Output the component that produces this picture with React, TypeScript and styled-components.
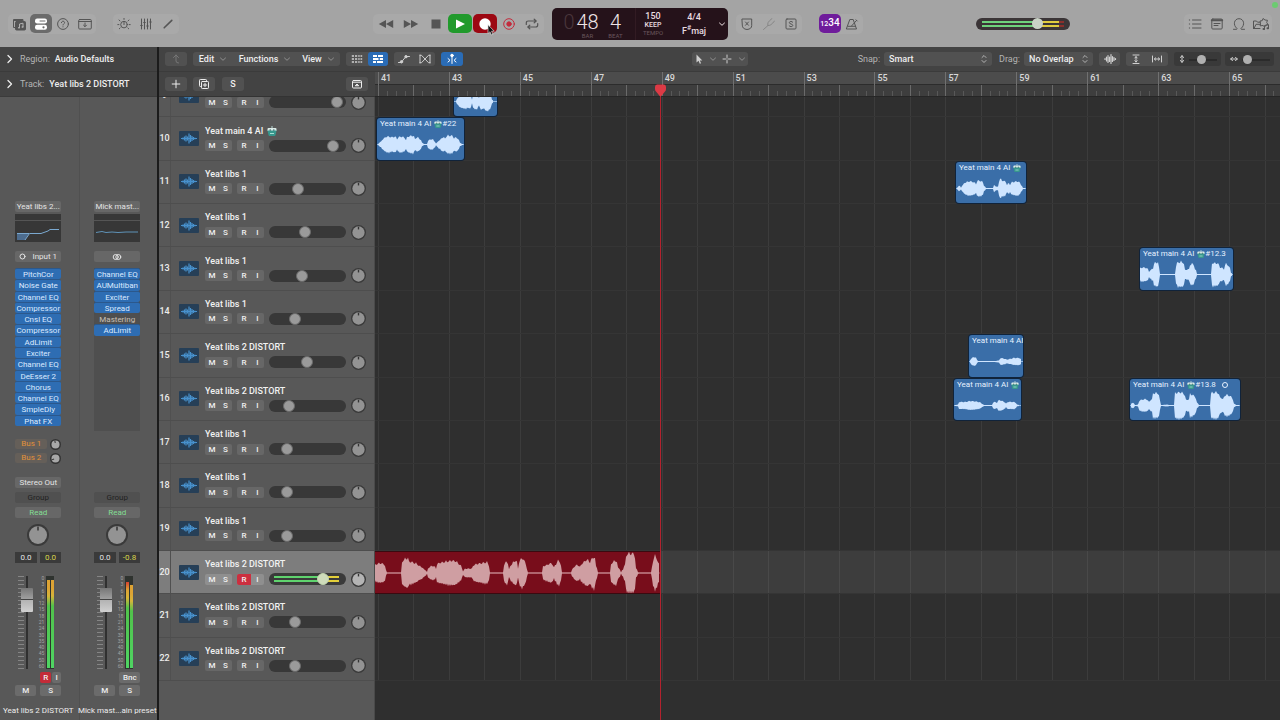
import React from "react";
import styled, { createGlobalStyle, css } from "styled-components";

const GlobalStyle = createGlobalStyle`
  *, *::before, *::after { box-sizing: border-box; }
  body { margin: 0; background: #303030; overflow: hidden; }
  button, input, select { font: inherit; color: inherit; margin: 0; padding: 0; border: 0; background: none; }
  svg { display: block; flex: none; }
`;

const Shell = styled.div`
  min-height: 100vh;
  display: flex;
  flex-direction: column;
  font-family: Roboto, "Liberation Sans", sans-serif;
  font-size: 9px;
  line-height: 11px;
  color: #ededed;
`;

/* ---------- icons ---------- */

type IconProps = { w?: number; h?: number; children: React.ReactNode; sw?: number };
const Icon = ({ w = 14, h = 14, sw = 1, children }: IconProps) => (
  <svg width={w} height={h} viewBox={`0 0 ${w} ${h}`} fill="none" stroke="currentColor" strokeWidth={sw} strokeLinecap="round" strokeLinejoin="round" aria-hidden="true">
    {children}
  </svg>
);

const LibraryIcon = () => (
  <Icon>
    <path d="M3 10.500H1.500v-8h9.500V4" />
    <path d="M1.500 3.500h9" />
    <rect x="3.500" y="4.500" width="10" height="8.500" rx="1" fill="currentColor" />
    <path d="M7.500 10.500V7l3.500-.8v3.600" stroke="#b0b0b0" />
    <path d="M6.700 10.700h.6M10.200 10h.6" stroke="#b0b0b0" strokeWidth="1.500" />
  </Icon>
);
const InspectorIcon = () => (
  <Icon>
    <rect x="1" y="1.500" width="12" height="5" rx="2.200" fill="#fff" stroke="none" />
    <rect x="1" y="7.800" width="12" height="5" rx="2.200" fill="#fff" stroke="none" />
    <path d="M6 4h5" stroke="#6a6a6a" />
    <circle cx="9.500" cy="10.300" r="1.100" fill="#6a6a6a" stroke="none" />
  </Icon>
);
const HelpIcon = () => (
  <Icon>
    <circle cx="7" cy="7" r="5.400" />
    <path d="M5.400 5.700c0-2.100 3.200-2 3.200 0 0 1.100-1.600 1.100-1.600 2.300M7 9.700v.2" />
  </Icon>
);
const ToolbarIcon = () => (
  <Icon>
    <rect x=".7" y="2.500" width="12.600" height="9.500" rx="1" />
    <path d="M.7 4.500h12.600M7 6v3.400M5.500 8.200L7 9.700l1.500-1.500" />
  </Icon>
);
const SmartIcon = () => (
  <Icon>
    <circle cx="7" cy="7.600" r="3.300" />
    <path d="M7 7.600V4.800M7 1.400v1M2 3l1 .9M12 3l-1 .9M.8 7.600h1.100M12.100 7.600h1.100M2.300 11.800l.8-.8M11.700 11.800l-.8-.8" />
  </Icon>
);
const MixerIcon = () => (
  <Icon>
    <path d="M2.500 2v10M5.500 2v10M8.500 2v10M11.500 2v10M1.700 8.500h1.600M4.700 5.500h1.600M7.700 9h1.600M10.700 5h1.600" />
  </Icon>
);
const PencilIcon = () => (
  <Icon sw={1.600}>
    <path d="M3.200 10.800l7.600-7.400" />
  </Icon>
);
const RewindIcon = () => (
  <Icon w={16}>
    <path d="M8 3v8L.8 7zM15.200 3v8L8 7z" fill="currentColor" stroke="none" />
  </Icon>
);
const ForwardIcon = () => (
  <Icon w={16}>
    <path d="M.8 3v8L8 7zM8 3v8l7.200-4z" fill="currentColor" stroke="none" />
  </Icon>
);
const StopIcon = () => (
  <Icon>
    <rect x="2.500" y="2.500" width="9" height="9" fill="currentColor" stroke="none" />
  </Icon>
);
const PlayIcon = () => (
  <Icon>
    <path d="M3 2.500v9L12 7z" fill="#fff" stroke="none" />
  </Icon>
);
const RecordIcon = () => (
  <Icon>
    <circle cx="7" cy="7" r="5.700" fill="#fff" stroke="none" />
  </Icon>
);
const CaptureIcon = () => (
  <Icon>
    <circle cx="7" cy="7" r="5.300" />
    <circle cx="7" cy="7" r="2.200" fill="currentColor" />
  </Icon>
);
const CycleIcon = () => (
  <Icon sw={1.200}>
    <path d="M1.300 7.500V6q0-2 2-2H11M9.200 2.200L11.200 4l-2 1.800M12.700 6.500V8q0 2-2 2H3M4.800 8.200L2.800 10l2 1.800" />
  </Icon>
);
const ReplaceIcon = () => (
  <Icon>
    <path d="M2.300 2h9.400v6.500q0 3.500-4.700 4-4.700-.5-4.700-4zM5.500 5l3 3.300M8.500 5l-3 3.300" />
  </Icon>
);
const TuningIcon = () => (
  <Icon>
    <path d="M1.500 12.500L6 8.500M6 8.500q-2-2.500 4-7M6 8.500q2.500 1 6.500-4.500" />
  </Icon>
);
const SoloIcon = () => (
  <Icon>
    <rect x="2" y="2" width="10" height="10" rx="1" />
    <path d="M8.800 5.200C8.200 4 5.300 4.200 5.300 5.700c0 1.600 3.500 1 3.500 2.700 0 1.500-3 1.700-3.700.4" />
  </Icon>
);
const MetronomeIcon = () => (
  <Icon>
    <path d="M5.200 2.500h3l3.300 9.500H1.700zM3 9.300h7.500M6.500 9l5-5.500M11 2.800l1.200 1.200" />
  </Icon>
);
const ListIcon = () => (
  <Icon>
    <path d="M4.500 3H13M4.500 7H13M4.500 11H13M1.300 3h.4M1.300 7h.4M1.300 11h.4" />
  </Icon>
);
const NoteIcon = () => (
  <Icon>
    <rect x="1.800" y="2" width="10.400" height="10" rx="1" />
    <path d="M1.800 3.300h10.400" strokeWidth="2" />
    <path d="M4 6.500h6M4 8.500h4" />
  </Icon>
);
const LoopIcon = () => (
  <Icon>
    <path d="M1.500 12.300h3c.8 0 .9-.5.300-1C.8 8 2 1.700 7 1.700s6.200 6.300 2.200 9.600c-.6.500-.5 1 .3 1h3" />
  </Icon>
);
const BrowserIcon = () => (
  <Icon w={18}>
    <path d="M1.500 11.500V4h3l1 1.200h2.500M1.500 11.500h6.500M2 11.500L4 7.300h4" />
    <path d="M8.500 6.500L8 4l2.200-.3L11 1.500l2 1.500 2.500.3-.8 2.200 1.300 2-2.300.8-1 1.700-1.700-1.500-2.500.3z" />
    <path d="M12.500 12V8.500l4-.8V11" />
    <path d="M11.500 12h.6M15.500 11.300h.6" strokeWidth="2" />
  </Icon>
);
const Chevron = () => (
  <Icon w={8} h={8}>
    <path d="M1.500 3L4 5.300 6.500 3" />
  </Icon>
);
const DimChevron = styled.span`
  color: #8f8f8f;
`;
const Disclosure = () => (
  <Icon w={6} h={10} sw={1.300}>
    <path d="M1 1.500L4.500 5 1 8.500" />
  </Icon>
);
const SteppersIcon = () => (
  <Icon w={6} h={10}>
    <path d="M1 3.500L3 1.500l2 2M1 6.500l2 2 2-2" />
  </Icon>
);
const UpIcon = () => (
  <Icon w={12} h={12}>
    <path d="M3.500 4.500L6 2l2.500 2.500M6 2v6q0 2 2.500 2" />
  </Icon>
);
const GridIcon = () => (
  <Icon w={12} h={12} sw={1.400}>
    <path d="M.8 3h2.200M4 3h2.200M7.200 3h1.500M9.500 3h1.700M.8 6h2.200M4 6h2.200M7.200 6h1.500M9.500 6h1.700M.8 9h2.200M4 9h2.200M7.200 9h1.500M9.500 9h1.700" strokeLinecap="butt" />
  </Icon>
);
const RegionsIcon = () => (
  <Icon w={12} h={12} sw={1.800}>
    <path d="M1 3h4M6 3h5M1 6h5.500M7.800 6h3.200M1 9h3M5 9h6" strokeLinecap="butt" />
  </Icon>
);
const AutomationIcon = () => (
  <Icon w={14} h={12}>
    <path d="M1.500 9.500h2.500L9 3.500h3.500" />
    <circle cx="4.500" cy="8.800" r="1.200" fill="currentColor" />
    <circle cx="9" cy="3.700" r="1.200" fill="currentColor" />
  </Icon>
);
const FlexIcon = () => (
  <Icon w={12} h={12}>
    <path d="M1 2v8M11 2v8M1 2.300h1.500L6 6 2.500 9.700H1M11 2.300H9.500L6 6l3.500 3.700H11" />
  </Icon>
);
const CatchIcon = () => (
  <Icon w={12} h={12}>
    <path d="M6 2.500v8M2 5.500L4 7.300 2 9M10 5.500L8 7.300 10 9" />
    <circle cx="6" cy="2.500" r="1.300" fill="currentColor" />
  </Icon>
);
const PointerIcon = () => (
  <Icon w={10} h={12}>
    <path d="M2.500 1.500v8l2-1.700 1.300 3 1.300-.6-1.300-2.800h2.500z" fill="currentColor" stroke="none" />
  </Icon>
);
const MarqueeIcon = () => (
  <Icon w={12} h={12}>
    <path d="M6 2v2.500M6 7.500V10M2 6h2.500M7.500 6H10M6 5.800v.4" />
  </Icon>
);
const WaveIcon = () => (
  <Icon w={14} h={12} sw={1.200}>
    <path d="M2 5.500v1M3.500 4v4M5 2.500v7M6.500 4v4.500M8 1.500v9M9.500 3.500v5M11 4.500v3M12.500 5.500v1" />
  </Icon>
);
const FitVIcon = () => (
  <Icon w={12} h={12}>
    <path d="M3 2h6M3 10.500h6M6 3.500V9M4.800 5L6 3.700 7.200 5M4.800 7.700L6 9l1.200-1.300" />
  </Icon>
);
const FitHIcon = () => (
  <Icon w={12} h={12}>
    <path d="M1.500 3v6M10.500 3v6M3.500 6h5M4.700 4.800L3.300 6l1.400 1.200M7.300 4.800L8.700 6 7.300 7.200" />
  </Icon>
);
const ArrowVIcon = () => (
  <Icon w={8} h={10}>
    <path d="M4 2v6M2.500 3.500L4 1.500l1.500 2M2.500 6.500L4 8.500l1.500-2" />
  </Icon>
);
const ArrowHIcon = () => (
  <Icon w={10} h={8}>
    <path d="M2 4h6M3.500 2.500L1.500 4l2 1.500M6.500 2.500L8.500 4l-2 1.500" />
  </Icon>
);
const PlusIcon = () => (
  <Icon w={12} h={12}>
    <path d="M6 2.200v7.600M2.200 6h7.600" />
  </Icon>
);
const DuplicateIcon = () => (
  <Icon w={12} h={12}>
    <path d="M3.500 8.500H2.300q-.8 0-.8-.8V2.300q0-.8.8-.8h5.400q.8 0 .8.800v1.200" />
    <rect x="3.500" y="3.500" width="7" height="7" rx=".8" />
    <path d="M7 5.300v3.400M5.300 7h3.400" />
  </Icon>
);
const TrackBoxIcon = () => (
  <Icon w={12} h={12}>
    <rect x="1.500" y="2.500" width="9" height="7.500" rx="1" />
    <path d="M1.500 4.200h9" />
    <path d="M4.500 7.500L6 6l1.500 1.500z" fill="currentColor" />
  </Icon>
);
const StereoIcon = () => (
  <Icon w={10} h={8}>
    <circle cx="3.700" cy="4" r="2.500" />
    <circle cx="6.300" cy="4" r="2.500" />
  </Icon>
);
const RobotIcon = ({ size = 10 }: { size?: number }) => (
  <svg width={size} height={size} viewBox="0 0 10 10" aria-hidden="true">
    <path d="M5 0v2" stroke="#b7d7d2" />
    <path d="M.5 3q0-1 1-1h7q1 0 1 1v2h-9z" fill="#dcebe8" />
    <path d="M.5 4.500h9L8.500 9q-.2 1-1 1h-5q-.8 0-1-1z" fill="#37978d" />
    <path d="M2.500 4h1.500M6 4h1.500" stroke="#27595a" />
    <path d="M3 7.500h4" stroke="#a8e0d4" />
  </svg>
);

/* ---------- top control bar ---------- */

const ControlBar = styled.header`
  position: relative;
  height: 47px;
  flex: none;
  display: grid;
  grid-template-columns: 1fr auto 1fr;
  align-items: center;
  background: #a4a4a4;
  color: #555;
`;
const BarSide = styled.div`
  display: flex;
  align-items: center;
  padding: 0 8px;
`;
const ToolGroup = styled.div`
  display: flex;
  align-items: center;
  height: 20px;
  border-radius: 5px;
  background: #a9a9a9;
`;
const Spacer = styled.div`
  flex: 1;
`;
const Gap = styled.div<{ $w: number }>`
  width: ${(p) => p.$w}px;
  flex: none;
`;
const ToolButton = styled.button<{ $w?: number; $bg?: string; $fg?: string; $dim?: boolean }>`
  position: relative;
  width: ${(p) => p.$w ?? 22}px;
  height: 19px;
  display: flex;
  align-items: center;
  justify-content: center;
  border-radius: 5px;
  background: ${(p) => p.$bg ?? "none"};
  color: ${(p) => p.$fg ?? "inherit"};
  opacity: ${(p) => (p.$dim ? 0.4 : 1)};
  font-weight: 500;
`;
const Cursor = styled.svg`
  position: absolute;
  left: 14px;
  top: 10px;
  z-index: 2;
`;
const Lcd = styled.div`
  width: 176px;
  height: 32px;
  display: grid;
  grid-template-columns: 84px 34px 48px 10px;
  align-items: center;
  border-radius: 5px;
  background: #25121a;
  color: #e9dde0;
`;
const Counter = styled.div`
  display: grid;
  grid-template-columns: 12px 25px 31px;
  justify-content: start;
  padding-left: 11px;
  border-right: 1px solid #321b23;
  height: 32px;
`;
const CounterCell = styled.div<{ $dim?: boolean }>`
  display: flex;
  flex-direction: column;
  align-items: center;
  font-size: 20px;
  line-height: 22px;
  padding-top: 3px;
  font-weight: 300;
  color: ${(p) => (p.$dim ? "#4a363c" : "#efe4e6")};
`;
const LcdCaption = styled.small`
  font-size: 6px;
  line-height: 6px;
  font-weight: 400;
  color: #6a565c;
`;
const LcdStack = styled.div<{ $gap?: number }>`
  display: flex;
  flex-direction: column;
  align-items: center;
  gap: ${(p) => p.$gap ?? 0}px;
  font-weight: 500;
  line-height: 10px;
`;
const Keep = styled.span`
  font-size: 7px;
  line-height: 9px;
`;
const Sharp = styled.sup`
  font-size: 7px;
  line-height: 0;
`;
const CountIn = styled.span`
  font-size: 10px;
  color: #fff;
`;
const CountInSmall = styled.span`
  font-size: 7px;
`;
const MasterVolume = styled.input`
  appearance: none;
  width: 94px;
  height: 12px;
  border-radius: 6px;
  background:
    linear-gradient(90deg, #6fd37c 68%, #e0cc3e 68%, #e0cc3e 94%, #8b2f2c 94%) 6px 3px / 82px 2px no-repeat,
    linear-gradient(90deg, #6fd37c 68%, #e0cc3e 68%, #e0cc3e 94%, #8b2f2c 94%) 6px 7px / 82px 2px no-repeat,
    #3b3537;
  &::-webkit-slider-thumb {
    appearance: none;
    width: 11px;
    height: 11px;
    border-radius: 50%;
    background: #c9d2c6;
  }
`;
const CameraDot = styled.span`
  position: absolute;
  top: 2px;
  right: 2px;
  width: 6px;
  height: 6px;
  border-radius: 50%;
  background: #6ccb70;
`;

/* ---------- main frame ---------- */

const Main = styled.main`
  flex: 1;
  display: grid;
  grid-template-columns: 157px 1fr;
  background: #1b1b1b;
  column-gap: 2px;
`;

/* ---------- inspector ---------- */

const Inspector = styled.aside`
  background: #585858;
  display: flex;
  flex-direction: column;
`;
const InspectorHead = styled.button`
  height: 25px;
  display: flex;
  align-items: center;
  gap: 5px;
  padding: 0 7px;
  background: #434343;
  border-bottom: 1px solid #3b3b3b;
  font-weight: 500;
  white-space: nowrap;
`;
const HeadLabel = styled.span`
  margin-left: 2px;
  font-weight: 400;
  color: #b4b4b4;
`;
const Strips = styled.div`
  flex: 1;
  display: grid;
  grid-template-columns: 1fr 1fr;
`;
const Strip = styled.section`
  min-width: 0;
  padding: 104px 2px 0 0;
  display: flex;
  flex-direction: column;
  align-items: center;
  font-size: 8px;
  & + & {
    border-left: 1px solid #505050;
  }
`;
const StripButton = styled.button<{ $mt?: number; $tone?: "group" | "read"; $hidden?: boolean }>`
  width: 46px;
  height: 11px;
  flex: none;
  display: flex;
  align-items: center;
  justify-content: center;
  gap: 6px;
  margin-top: ${(p) => p.$mt ?? 0}px;
  border-radius: 2px;
  background: #676767;
  color: #e4e4e4;
  line-height: 11px;
  white-space: nowrap;
  visibility: ${(p) => (p.$hidden ? "hidden" : "visible")};
  ${(p) => p.$tone === "group" && css`background: #505050; color: #222;`}
  ${(p) => p.$tone === "read" && css`color: #83dd93;`}
`;
const EqBox = styled.div`
  width: 46px;
  height: 28px;
  flex: none;
  margin-top: 2px;
  background: #373737;
`;
const Slots = styled.div<{ $open?: boolean }>`
  width: 46px;
  height: 163px;
  flex: none;
  margin-top: 6px;
  background: ${(p) => (p.$open ? "#4f4f4f" : "none")};
`;
const SlotGrid = styled.div`
  height: 158px;
  display: grid;
  grid-template-rows: repeat(14, 1fr);
`;
const Slot = styled.button<{ $off?: boolean }>`
  min-height: 0;
  line-height: 11px;
  border-top: 1px solid ${(p) => (p.$off ? "#4f4f4f" : "#2b588c")};
  border-radius: 2px;
  background: ${(p) => (p.$off ? "#4f4f4f" : "#2e6db3")};
  color: ${(p) => (p.$off ? "#c9c0b8" : "#dceaff")};
  white-space: nowrap;
`;
const Sends = styled.div<{ $hidden?: boolean }>`
  width: 46px;
  height: 24px;
  flex: none;
  margin-top: 8px;
  display: flex;
  flex-direction: column;
  justify-content: space-between;
  visibility: ${(p) => (p.$hidden ? "hidden" : "visible")};
`;
const Send = styled.div`
  display: flex;
  justify-content: space-between;
  align-items: center;
  height: 10px;
`;
const SendButton = styled.button`
  width: 32px;
  height: 10px;
  line-height: 10px;
  border-radius: 2px;
  background: #655f59;
  color: #e0913a;
`;
const KnobButton = styled.button<{ $mt?: number }>`
  flex: none;
  margin-top: ${(p) => p.$mt ?? 0}px;
`;
const Readouts = styled.div`
  width: 46px;
  flex: none;
  margin-top: 6px;
  display: grid;
  grid-template-columns: 1fr 1fr;
  gap: 3px;
`;
const Readout = styled.output<{ $hot?: boolean }>`
  height: 11px;
  text-align: center;
  background: #3a3a3a;
  color: ${(p) => (p.$hot ? "#d9d54a" : "#e4e4e4")};
`;
const FaderArea = styled.div`
  width: 46px;
  height: 93px;
  flex: none;
  margin-top: 13px;
  display: flex;
  padding-left: 3px;
`;
const FaderTicks = styled.div`
  width: 6px;
  background: repeating-linear-gradient(#858585 0 1px, transparent 1px 4px);
`;
const Fader = styled.input`
  appearance: none;
  writing-mode: vertical-lr;
  direction: rtl;
  width: 12px;
  height: 93px;
  margin-left: -3px;
  background: linear-gradient(#303030, #303030) 5px 0 / 2px 93px no-repeat;
  &::-webkit-slider-thumb {
    appearance: none;
    width: 12px;
    height: 24px;
    border-radius: 1px;
    background: linear-gradient(#777, #a0a0a0 46%, #444 46%, #444 52%, #b4b4b4 52%, #d0d0d0);
  }
`;
const FaderScale = styled.ol`
  width: 10px;
  margin: 0 2px 0 1px;
  padding: 0;
  list-style: none;
  display: flex;
  flex-direction: column;
  justify-content: space-between;
  font-size: 5px;
  line-height: 5px;
  text-align: right;
  color: #a3a3a3;
`;
const Meter = styled.div`
  width: 8px;
  height: 93px;
  display: grid;
  grid-template-columns: 3px 3px;
  gap: 1px;
  align-items: end;
  padding: 0 0 1px 1px;
  background: #2f332f;
`;
const MeterBar = styled.div<{ $h: number; $clip?: boolean }>`
  height: ${(p) => p.$h}px;
  background: linear-gradient(${(p) => (p.$clip ? "#d8402f" : "#dda334")}, #dda334 8px, #d6b43a 16px, #51c24b 26px, #4fd463);
`;
const PairRow = styled.div<{ $mt: number; $gap: number; $end?: boolean }>`
  width: 46px;
  height: 11px;
  flex: none;
  margin-top: ${(p) => p.$mt}px;
  display: flex;
  gap: ${(p) => p.$gap}px;
  justify-content: ${(p) => (p.$end ? "flex-end" : "space-between")};
`;
const MiniButton = styled.button<{ $w?: number; $rec?: boolean }>`
  width: ${(p) => p.$w ?? 21}px;
  height: 11px;
  line-height: 11px;
  border-radius: 2px;
  background: ${(p) => (p.$rec ? "#c42b38" : "#6b6b6b")};
  color: #eee;
  font-weight: 500;
`;
const StripName = styled.div`
  margin-top: 9px;
  text-align: center;
  white-space: nowrap;
  line-height: 12px;
`;

/* ---------- tracks area ---------- */

const Workspace = styled.section`
  min-width: 0;
  display: flex;
  flex-direction: column;
  background: #2c2c2c;
`;
const MenuBar = styled.nav`
  height: 25px;
  flex: none;
  display: flex;
  align-items: center;
  padding: 0 6px;
  background: #434343;
  border-bottom: 1px solid #3b3b3b;
  color: #cfcfcf;
`;
const MenuGroup = styled.div`
  display: flex;
  height: 14px;
  border-radius: 3px;
  background: #515151;
`;
const MenuButton = styled.button<{ $w?: number; $on?: boolean; $solid?: boolean; $dim?: boolean }>`
  width: ${(p) => p.$w ?? 22}px;
  height: 14px;
  flex: none;
  display: flex;
  align-items: center;
  justify-content: center;
  gap: 5px;
  border-radius: 3px;
  background: ${(p) => (p.$on ? "#2a6cb6" : p.$solid ? "#515151" : "none")};
  color: ${(p) => (p.$on ? "#fff" : p.$dim ? "#777" : "inherit")};
`;
const MenuText = styled.span`
  color: #eee;
  font-weight: 500;
`;
const Field = styled.label`
  display: flex;
  align-items: center;
  gap: 4px;
  color: #b4b4b4;
`;
const SelectBox = styled.span<{ $w: number }>`
  width: ${(p) => p.$w}px;
  height: 14px;
  display: flex;
  align-items: center;
  padding: 0 5px;
  border-radius: 3px;
  background: #515151;
`;
const Select = styled.select`
  appearance: none;
  flex: 1;
  min-width: 0;
  color: #eee;
  font-weight: 500;
  outline: none;
`;
const ZoomBox = styled.label`
  display: flex;
  align-items: center;
  gap: 3px;
  height: 14px;
  padding: 0 4px;
  border-radius: 3px;
  background: #393939;
`;
const ZoomSlider = styled.input`
  appearance: none;
  width: 28px;
  height: 9px;
  background: linear-gradient(#2b2b2b, #2b2b2b) 0 4px / 28px 2px no-repeat;
  &::-webkit-slider-thumb {
    appearance: none;
    width: 9px;
    height: 9px;
    border-radius: 50%;
    background: #b0b0b0;
  }
`;
const HeadRow = styled.div`
  height: 25px;
  flex: none;
  display: grid;
  grid-template-columns: 216px 1fr;
  background: #434343;
`;
const HeadTools = styled.div`
  display: flex;
  align-items: center;
  padding: 0 7px 0 6px;
  border-bottom: 1px solid #333;
`;
const Ruler = styled.div`
  min-width: 0;
  overflow: hidden;
  padding-left: 3px;
  background: linear-gradient(#4c4c4c 12px, #2c2c2c 12px, #2c2c2c 13px, #3e3e3e 13px);
  border-bottom: 1px solid #262626;
`;
const RulerCells = styled.div`
  width: 922px;
  height: 24px;
  display: grid;
  grid-template-columns: repeat(13, 1fr);
`;
const RulerCell = styled.div`
  display: flex;
  flex-direction: column;
  border-left: 1px solid #707070;
  font-weight: 500;
  line-height: 12px;
  color: #d8d8d8;
`;
const RulerLabel = styled.span`
  padding-left: 2px;
`;
const Ticks = styled.div`
  height: 12px;
  display: grid;
  grid-template-columns: repeat(8, 1fr);
  align-items: end;
  margin-left: -1px;
`;
const Tick = styled.i<{ $bar?: boolean }>`
  height: ${(p) => (p.$bar ? 11 : 5)}px;
  border-left: 1px solid ${(p) => (p.$bar ? "#6a6a6a" : "#585858")};
`;
const Board = styled.div`
  position: relative;
  flex: 1;
  min-height: 0;
  display: grid;
  grid-template-columns: 216px 1fr;
`;
const HeadersColumn = styled.div`
  background: #585858;
  border-right: 1px solid #4a4a4a;
  overflow: hidden;
`;
const LanesColumn = styled.div`
  min-width: 0;
  overflow: hidden;
  background: #2f2f2f;
`;
const rows = css`
  height: 607px;
  margin-top: -23px;
  display: grid;
  grid-template-rows: repeat(14, 1fr);
`;
const TrackList = styled.ol`
  ${rows}
  padding: 0;
  margin-bottom: 0;
  margin-left: 0;
  list-style: none;
`;
const Track = styled.li<{ $sel?: boolean }>`
  display: grid;
  grid-template-columns: 12px 33px 1fr;
  align-items: center;
  min-height: 0;
  border-bottom: 1px solid #4e4e4e;
  background: ${(p) => (p.$sel ? "#7d7d7d" : "none")};
`;
const TrackNumber = styled.span`
  align-self: stretch;
  display: flex;
  align-items: center;
  justify-content: center;
  border-right: 1px solid #505050;
  font-weight: 500;
`;
const TrackBody = styled.div`
  padding: 1px 0 0 1px;
  display: flex;
  flex-direction: column;
  gap: 1px;
`;
const TrackName = styled.div`
  display: flex;
  gap: 4px;
  align-items: center;
  height: 12px;
  font-weight: 500;
  white-space: nowrap;
  color: #f2f2f2;
`;
const TrackControls = styled.div`
  display: flex;
  align-items: center;
  height: 15px;
`;
const ButtonPair = styled.div<{ $sel?: boolean }>`
  display: flex;
  height: 11px;
  margin-right: 5px;
  border-radius: 2px;
  overflow: hidden;
  background: ${(p) => (p.$sel ? "#8f8f8f" : "#676767")};
`;
const TrackButton = styled.button<{ $rec?: boolean }>`
  width: 14px;
  height: 11px;
  font-size: 8px;
  line-height: 11px;
  font-weight: 500;
  color: #f2f2f2;
  background: ${(p) => (p.$rec ? "#cc2f3f" : "none")};
  & + & {
    width: 13px;
  }
`;
const TrackVolume = styled.input<{ $live?: boolean }>`
  appearance: none;
  width: 77px;
  height: 12px;
  margin-right: 5px;
  border-radius: 6px;
  background: ${(p) =>
    p.$live
      ? css`linear-gradient(90deg, #5fd36e 80%, #e3cf3a 80%) 5px 3px / 65px 2px no-repeat,
        linear-gradient(90deg, #5fd36e 80%, #e3cf3a 80%) 5px 7px / 65px 2px no-repeat,
        #3a3a3a`
      : "#383838"};
  &::-webkit-slider-thumb {
    appearance: none;
    width: 12px;
    height: 12px;
    border-radius: 50%;
    border: 1px solid ${(p) => (p.$live ? "#c0d3ae" : "#6a6a6a")};
    background: ${(p) => (p.$live ? "#cfdcbb" : "#9a9a9a")};
  }
`;
const Lanes = styled.div`
  ${rows}
  position: relative;
  overflow: hidden;
`;
const BarLines = styled.div`
  position: absolute;
  top: 0;
  bottom: 0;
  left: 3px;
  width: 922px;
  display: grid;
  grid-template-columns: repeat(26, 1fr);
`;
const BarLine = styled.i`
  border-left: 1px solid #3c3c3c;
`;
const Lane = styled.div<{ $sel?: boolean }>`
  position: relative;
  min-height: 0;
  border-bottom: 1px solid #353535;
  background: ${(p) => (p.$sel ? "rgba(255,255,255,0.07)" : "none")};
`;
const RegionBox = styled.div<{ $x: number; $w: number; $rec?: boolean }>`
  position: absolute;
  top: 1px;
  bottom: 0;
  left: ${(p) => p.$x}px;
  width: ${(p) => p.$w}px;
  overflow: hidden;
  border-radius: ${(p) => (p.$rec ? 0 : 3)}px;
  background: ${(p) => (p.$rec ? "#780d1b" : "#3a6ea8")};
  box-shadow: 0 0 0 1px ${(p) => (p.$rec ? "#3a0a10" : "#10233a")};
`;
const RegionLabel = styled.div`
  position: absolute;
  top: 1px;
  left: 3px;
  display: flex;
  align-items: center;
  font-size: 8px;
  line-height: 10px;
  white-space: nowrap;
  color: #e6f1ff;
`;
const RobotSlot = styled.span`
  margin-left: 3px;
`;
const LoopDot = styled.i`
  width: 6px;
  height: 6px;
  margin-left: 6px;
  border: 1px solid #e6f1ff;
  border-radius: 50%;
`;
const Wave = styled.svg`
  position: absolute;
  left: 0;
  top: 0;
`;
const Playhead = styled.div`
  position: absolute;
  top: -13px;
  bottom: 0;
  left: 495px;
  width: 13px;
  z-index: 3;
  pointer-events: none;
  display: flex;
  flex-direction: column;
  align-items: center;
`;
const PlayLine = styled.i`
  flex: 1;
  width: 1px;
  background: #b3222e;
`;

/* ---------- waveforms ---------- */

type Env = [number, number][];

/* Builds a closed outline from [x, amplitude] pairs; the ramps bulge outwards. */
const waveShape = (env: Env, mid: number, rough: number) => {
  const top: string[] = [];
  const bottom: string[] = [];
  for (let i = 0; i < env.length - 1; i++) {
    const [x0, a0] = env[i];
    const [x1, a1] = env[i + 1];
    const steps = Math.max(1, Math.round(x1 - x0));
    for (let s = 0; s < steps; s++) {
      const t = s / steps;
      const ease = a1 < a0 ? t * t : 1 - (1 - t) * (1 - t);
      const x = x0 + (x1 - x0) * t;
      const a = a0 + (a1 - a0) * ease;
      const up = a * (1 - rough * Math.abs(Math.sin(x * 2.3)));
      const down = a * (1 - rough * Math.abs(Math.cos(x * 1.7)));
      top.push(`${x.toFixed(1)} ${(mid - Math.max(up, 0.4)).toFixed(1)}`);
      bottom.unshift(`${x.toFixed(1)} ${(mid + Math.max(down, 0.4)).toFixed(1)}`);
    }
  }
  return `M${top.join("L")}L${bottom.join("L")}Z`;
};

const phraseEnv: Env = [
  [1, 0], [4, 3], [6, 6], [11, 9], [15, 8], [18, 9], [20, 6], [23, 9], [27, 8], [29, 5], [31, 9], [36, 10], [38, 6], [40, 8], [43, 6], [45, 2], [47, 0], [50, 0], [51, 4], [55, 6], [57, 4], [59, 1], [60, 2], [63, 5], [66, 8], [68, 7], [71, 10], [75, 10], [77, 7], [79, 8], [83, 2], [85, 0], [87, 0],
];
const shortEnv: Env = [
  [2, 0], [4, 4], [7, 7], [11, 8], [14, 7], [16, 8], [18, 2], [19, 7], [22, 9], [25, 4], [27, 9], [30, 8], [33, 11], [36, 8], [38, 2], [40, 0],
];
const libEnv: Env = [
  [1, 0], [3, 3], [5, 1], [7, 4], [10, 7], [14, 8], [18, 7], [20, 5], [22, 9], [26, 8], [28, 3], [30, 0], [37, 0], [38, 4], [40, 2], [42, 2], [43, 8], [44, 11], [46, 9], [49, 8], [51, 4], [53, 6], [54, 4], [56, 7], [62, 8], [65, 4], [67, 0], [70, 0],
];
const burstEnv: Env = [
  [0, 7], [3, 8], [7, 7], [9, 3], [11, 5], [13, 7], [14, 12], [18, 14], [19, 8], [20, 0], [35, 0], [36, 9], [38, 14], [43, 14], [45, 5], [49, 6], [50, 11], [53, 12], [55, 6], [57, 0], [71, 0], [72, 13], [77, 13], [80, 8], [84, 6], [86, 12], [89, 9], [91, 2], [93, 0],
];
const quietEnv: Env = [
  [1, 1], [3, 4], [6, 5], [8, 2], [9, 0], [26, 0], [28, 1], [30, 1], [32, 4], [35, 3], [38, 2], [42, 3], [45, 4], [50, 4], [53, 1],
];
const calmEnv: Env = [
  [1, 0], [4, 1], [5, 4], [12, 4], [17, 5], [24, 4], [28, 2], [30, 0], [38, 0], [40, 4], [43, 3], [45, 6], [50, 4], [52, 2], [54, 4], [60, 4], [63, 1], [66, 0],
];
const longEnv: Env = [
  [1, 2], [3, 3], [5, 0], [8, 1], [10, 6], [16, 7], [19, 4], [22, 7], [23, 14], [28, 14], [30, 5], [31, 0], [37, 1], [40, 0], [44, 0], [45, 14], [50, 15], [54, 13], [56, 6], [59, 7], [60, 13], [64, 11], [67, 3], [69, 0], [80, 0], [81, 14], [87, 15], [90, 9], [93, 7], [96, 12], [101, 10], [104, 2], [106, 0], [110, 0],
];
const recordEnv: Env = [
  [0, 9], [5, 11], [9, 10], [11, 3], [12, 0], [26, 0], [27, 12], [29, 15], [33, 17], [34, 13], [40, 11], [44, 8], [49, 4], [52, 1], [53, 5], [58, 8], [61, 5], [62, 10], [67, 12], [72, 13], [78, 14], [84, 10], [88, 2], [91, 5], [97, 5], [99, 9], [106, 11], [112, 12], [114, 8], [115, 0], [128, 0], [129, 9], [132, 13], [134, 4], [137, 10], [141, 14], [143, 5], [145, 14], [147, 17], [149, 14], [152, 4], [153, 0], [167, 0], [168, 7], [172, 9], [176, 11], [179, 6], [181, 10], [184, 14], [186, 8], [187, 0], [196, 0], [198, 5], [202, 9], [205, 7], [209, 12], [212, 15], [215, 12], [219, 18], [221, 8], [223, 0], [235, 0], [236, 10], [241, 14], [243, 6], [245, 4], [246, 0], [248, 4], [250, 9], [252, 22], [259, 22], [261, 5], [263, 1], [265, 0], [276, 0], [277, 7], [280, 19], [283, 12], [285, 4],
];

const TrackIcon = () => (
  <IconTile width="20" height="15" viewBox="0 0 20 15" aria-hidden="true">
    <rect width="20" height="15" rx="1" fill="#263f57" />
    <path d="M2 7.500h16M4 6.500v2M5.500 5.500v4M7 4.500v6M8.500 5.500v4M10 2.500v10M11.500 4v7M13 5v5M14.500 6v3M16 6.800v1.500" stroke="#4791cd" strokeWidth="1.200" />
  </IconTile>
);
const IconTile = styled.svg`
  margin-left: 8px;
`;

const PanKnob = ({ size, mt, light }: { size: number; mt?: number; light?: boolean }) => (
  <KnobButton $mt={mt} aria-label="Pan">
    <svg width={size} height={size} viewBox="0 0 22 22" aria-hidden="true">
      <circle cx="11" cy="11" r="11" fill="#3a3a3a" />
      <circle cx="11" cy="11" r="9" fill={light ? "#b4b4b4" : "#939393"} />
      <path d="M11 2.500v4" stroke="#333" strokeWidth={size > 18 ? 1.5 : 2} />
    </svg>
  </KnobButton>
);
const SendKnob = ({ turn }: { turn: number }) => (
  <KnobButton aria-label="Send level">
    <svg width="11" height="11" viewBox="0 0 11 11" aria-hidden="true">
      <circle cx="5.500" cy="5.500" r="5.500" fill="#333" />
      <circle cx="5.500" cy="5.500" r="4" fill="#a8a8a8" />
      <path d="M5.500 4V1.500" stroke="#333" transform={`rotate(${turn} 5.5 5.5)`} />
    </svg>
  </KnobButton>
);

/* ---------- data ---------- */

type RegionData = { x: number; w: number; env: Env; label?: string; tag?: string; robot?: boolean; loop?: boolean; rec?: boolean };
type TrackData = { n: number; name: string; vol: number; robot?: boolean; sel?: boolean; regions?: RegionData[] };

/* Track 9 is scrolled half under the ruler, so only its controls are in view. */
const tracks: TrackData[] = [
  { n: 9, name: "", vol: 62, regions: [{ x: 79, w: 43, env: shortEnv }] },
  { n: 10, name: "Yeat main 4 AI", vol: 58, robot: true, regions: [{ x: 2, w: 87, env: phraseEnv, label: "Yeat main 4 AI", tag: "#22", robot: true }] },
  { n: 11, name: "Yeat libs 1", vol: 23, regions: [{ x: 581, w: 70, env: libEnv, label: "Yeat main 4 AI", robot: true }] },
  { n: 12, name: "Yeat libs 1", vol: 30 },
  { n: 13, name: "Yeat libs 1", vol: 27, regions: [{ x: 765, w: 93, env: burstEnv, label: "Yeat main 4 AI", tag: "#12.3", robot: true }] },
  { n: 14, name: "Yeat libs 1", vol: 20 },
  { n: 15, name: "Yeat libs 2 DISTORT", vol: 32, regions: [{ x: 594, w: 54, env: quietEnv, label: "Yeat main 4 AI" }] },
  {
    n: 16, name: "Yeat libs 2 DISTORT", vol: 14, regions: [
      { x: 579, w: 67, env: calmEnv, label: "Yeat main 4 AI", robot: true },
      { x: 755, w: 110, env: longEnv, label: "Yeat main 4 AI", tag: "#13.8", robot: true, loop: true },
    ],
  },
  { n: 17, name: "Yeat libs 1", vol: 12 },
  { n: 18, name: "Yeat libs 1", vol: 12 },
  { n: 19, name: "Yeat libs 1", vol: 12 },
  { n: 20, name: "Yeat libs 2 DISTORT", vol: 48, sel: true, regions: [{ x: 0, w: 285, env: recordEnv, rec: true }] },
  { n: 21, name: "Yeat libs 2 DISTORT", vol: 20 },
  { n: 22, name: "Yeat libs 2 DISTORT", vol: 20 },
];

const scale = [0, 3, 6, 9, 12, 15, 18, 21, 24, 30, 35, 40, 45, 50, 60];

type StripData = {
  title: string; name: string; slots: string[]; off?: string; input?: string; out?: string; peak: string;
  sends?: boolean; bars: [number, number]; clip?: boolean; curve: React.ReactNode;
};
const strips: StripData[] = [
  {
    title: "Yeat libs 2...", name: "Yeat libs 2 DISTORT", input: "Input 1", out: "Stereo Out", peak: "0.0", sends: true, bars: [88, 88],
    slots: ["PitchCor", "Noise Gate", "Channel EQ", "Compressor", "Cnsl EQ", "Compressor", "AdLimit", "Exciter", "Channel EQ", "DeEsser 2", "Chorus", "Channel EQ", "SmpleDly", "Phat FX"],
    curve: (
      <>
        <path d="M2 19.500H14L10 26H2z" fill="#4d6c8e" />
        <path d="M2 19.500H14M10 26L14.500 19.500H26L33 17l2-1.500h9" fill="none" stroke="#7ba9d0" />
      </>
    ),
  },
  {
    title: "Mick mast...", name: "Mick mast...ain preset", peak: "-0.8", bars: [86, 83], clip: true, off: "Mastering",
    slots: ["Channel EQ", "AUMultiban", "Exciter", "Spread", "Mastering", "AdLimit"],
    curve: <path d="M2 18.500l6-1 4 1 6-.5 6 .5 8-.5h12" fill="none" stroke="#5f93b8" />,
  },
];

/* ---------- pieces ---------- */

const ChannelStrip = ({ s }: { s: StripData }) => (
  <Strip>
    <StripButton>{s.title}</StripButton>
    <EqBox>
      <svg width="46" height="28" viewBox="0 0 46 28" aria-hidden="true">
        <path d="M0 6.500h46" stroke="#555" />
        {s.curve}
      </svg>
    </EqBox>
    <StripButton $mt={9}>
      {s.input ? (
        <>
          <Icon w={7} h={7}><circle cx="3.500" cy="3.500" r="2.500" /></Icon>
          {s.input}
        </>
      ) : (
        <StereoIcon />
      )}
    </StripButton>
    <Slots $open={!s.sends}>
      <SlotGrid>
        {s.slots.map((p, i) => (
          <Slot key={i} $off={p === s.off}>{p}</Slot>
        ))}
      </SlotGrid>
    </Slots>
    <Sends $hidden={!s.sends}>
      {s.sends && (
        <>
          <Send><SendButton>Bus 1</SendButton><SendKnob turn={-10} /></Send>
          <Send><SendButton>Bus 2</SendButton><SendKnob turn={-110} /></Send>
        </>
      )}
    </Sends>
    <StripButton $mt={14} $hidden={!s.out}>{s.out}</StripButton>
    <StripButton $mt={4} $tone="group">Group</StripButton>
    <StripButton $mt={4} $tone="read">Read</StripButton>
    <PanKnob size={22} mt={6} />
    <Readouts>
      <Readout>0.0</Readout>
      <Readout $hot>{s.peak}</Readout>
    </Readouts>
    <FaderArea>
      <FaderTicks />
      <Fader type="range" min={0} max={69} defaultValue={57} aria-label={`${s.name} volume`} />
      <FaderScale>
        {scale.map((v) => <li key={v}>{v}</li>)}
      </FaderScale>
      <Meter>
        <MeterBar $h={s.bars[0]} $clip={s.clip} />
        <MeterBar $h={s.bars[1]} />
      </Meter>
    </FaderArea>
    <PairRow $mt={3} $gap={1} $end>
      {s.sends ? (
        <>
          <MiniButton $w={11} $rec>R</MiniButton>
          <MiniButton $w={9}>I</MiniButton>
        </>
      ) : (
        <MiniButton>Bnc</MiniButton>
      )}
    </PairRow>
    <PairRow $mt={2} $gap={3}>
      <MiniButton>M</MiniButton>
      <MiniButton>S</MiniButton>
    </PairRow>
    <StripName>{s.name}</StripName>
  </Strip>
);

const TrackHeader = ({ t }: { t: TrackData }) => (
  <Track $sel={t.sel}>
    <TrackNumber>{t.n}</TrackNumber>
    <TrackIcon />
    <TrackBody>
      <TrackName>{t.name}{t.robot && <RobotIcon />}</TrackName>
      <TrackControls>
        <ButtonPair $sel={t.sel}>
          <TrackButton>M</TrackButton>
          <TrackButton>S</TrackButton>
        </ButtonPair>
        <ButtonPair $sel={t.sel}>
          <TrackButton $rec={t.sel}>R</TrackButton>
          <TrackButton>I</TrackButton>
        </ButtonPair>
        <TrackVolume type="range" min={0} max={65} defaultValue={t.vol} $live={t.sel} aria-label={`Track ${t.n} volume`} />
        <PanKnob size={15} light={t.sel} />
      </TrackControls>
    </TrackBody>
  </Track>
);

const Region = ({ r }: { r: RegionData }) => (
  <RegionBox $x={r.x} $w={r.w} $rec={r.rec}>
    <Wave width={r.w} height="42" viewBox={`0 0 ${r.w} 42`} aria-hidden="true">
      <path d={`M0 ${r.rec ? 21 : 26.5}h${r.w}`} stroke={r.rec ? "#b8606a" : "#a9ccf0"} strokeWidth=".8" />
      <path d={waveShape(r.env, r.rec ? 21 : 26.5, 0.2)} fill={r.rec ? "#cf9ea2" : "#cfe5ff"} />
    </Wave>
    {r.label && (
      <RegionLabel>
        {r.label}
        {r.robot && <RobotSlot><RobotIcon size={8} /></RobotSlot>}
        {r.tag}
        {r.loop && <LoopDot />}
      </RegionLabel>
    )}
  </RegionBox>
);

export default function App() {
  return (
    <Shell>
      <GlobalStyle />
      <ControlBar>
        <BarSide>
          <ToolGroup>
            <ToolButton aria-label="Library"><LibraryIcon /></ToolButton>
            <ToolButton aria-label="Inspector" $bg="#6b6b6b"><InspectorIcon /></ToolButton>
            <ToolButton aria-label="Quick help"><HelpIcon /></ToolButton>
            <ToolButton aria-label="Toolbar"><ToolbarIcon /></ToolButton>
          </ToolGroup>
          <Gap $w={17} />
          <ToolGroup>
            <ToolButton aria-label="Smart controls"><SmartIcon /></ToolButton>
            <ToolButton aria-label="Mixer"><MixerIcon /></ToolButton>
            <ToolButton aria-label="Editors"><PencilIcon /></ToolButton>
          </ToolGroup>
          <Spacer />
          <ToolGroup>
            <ToolButton $w={25} aria-label="Rewind"><RewindIcon /></ToolButton>
            <ToolButton $w={25} aria-label="Forward"><ForwardIcon /></ToolButton>
            <ToolButton $w={25} aria-label="Stop"><StopIcon /></ToolButton>
            <ToolButton $w={24} aria-label="Play" $bg="#219a2c"><PlayIcon /></ToolButton>
            <Gap $w={1} />
            <ToolButton $w={24} aria-label="Record" $bg="#9c0712">
              <RecordIcon />
              <Cursor width="9" height="12" viewBox="0 0 9 12" aria-hidden="true">
                <path d="M1 .8v8.700l2-1.700 1.400 3.200 1.600-.7-1.400-3.100h2.700z" fill="#111" stroke="#ddd" strokeWidth=".7" />
              </Cursor>
            </ToolButton>
            <ToolButton $w={23} aria-label="Capture recording" $fg="#c32b3d"><CaptureIcon /></ToolButton>
            <ToolButton $w={24} aria-label="Cycle"><CycleIcon /></ToolButton>
          </ToolGroup>
        </BarSide>
        <Lcd>
          <Counter>
            <CounterCell $dim>0</CounterCell>
            <CounterCell>48<LcdCaption>BAR</LcdCaption></CounterCell>
            <CounterCell>4<LcdCaption>BEAT</LcdCaption></CounterCell>
          </Counter>
          <LcdStack><span>150</span><Keep>KEEP</Keep><LcdCaption>TEMPO</LcdCaption></LcdStack>
          <LcdStack $gap={4}><span>4/4</span><span>F<Sharp>#</Sharp>maj</span></LcdStack>
          <Chevron />
        </Lcd>
        <BarSide>
          <ToolGroup>
            <ToolButton aria-label="Replace"><ReplaceIcon /></ToolButton>
            <ToolButton aria-label="Tuner" $dim><TuningIcon /></ToolButton>
            <ToolButton aria-label="Solo"><SoloIcon /></ToolButton>
          </ToolGroup>
          <Gap $w={17} />
          <ToolGroup>
            <ToolButton aria-label="Count in" $bg="#6f1c9b">
              <CountIn><CountInSmall>12</CountInSmall>34</CountIn>
            </ToolButton>
            <ToolButton aria-label="Metronome"><MetronomeIcon /></ToolButton>
          </ToolGroup>
          <Gap $w={113} />
          <MasterVolume type="range" min={0} max={83} defaultValue={56} aria-label="Master volume" />
          <Spacer />
          <ToolGroup>
            <ToolButton aria-label="List editors"><ListIcon /></ToolButton>
            <ToolButton aria-label="Note pad"><NoteIcon /></ToolButton>
            <ToolButton aria-label="Loop browser"><LoopIcon /></ToolButton>
            <ToolButton aria-label="Browsers"><BrowserIcon /></ToolButton>
          </ToolGroup>
        </BarSide>
        <CameraDot />
      </ControlBar>

      <Main>
        <Inspector>
          <InspectorHead><Disclosure /><HeadLabel>Region:</HeadLabel>Audio Defaults</InspectorHead>
          <InspectorHead><Disclosure /><HeadLabel>Track:</HeadLabel>Yeat libs 2 DISTORT</InspectorHead>
          <Strips>
            {strips.map((s) => <ChannelStrip key={s.name} s={s} />)}
          </Strips>
        </Inspector>

        <Workspace>
          <MenuBar>
            <MenuButton $solid $dim aria-label="Up"><UpIcon /></MenuButton>
            <Gap $w={6} />
            <MenuGroup>
              <MenuButton $w={40}><MenuText>Edit</MenuText><DimChevron><Chevron /></DimChevron></MenuButton>
              <MenuButton $w={64}><MenuText>Functions</MenuText><DimChevron><Chevron /></DimChevron></MenuButton>
              <MenuButton $w={43}><MenuText>View</MenuText><DimChevron><Chevron /></DimChevron></MenuButton>
            </MenuGroup>
            <Gap $w={6} />
            <MenuGroup>
              <MenuButton aria-label="Grid"><GridIcon /></MenuButton>
              <MenuButton $w={20} $on aria-label="Tracks"><RegionsIcon /></MenuButton>
            </MenuGroup>
            <Gap $w={6} />
            <MenuGroup>
              <MenuButton $w={20} aria-label="Automation"><AutomationIcon /></MenuButton>
              <MenuButton $w={21} aria-label="Flex"><FlexIcon /></MenuButton>
            </MenuGroup>
            <Gap $w={6} />
            <MenuButton $on aria-label="Catch playhead"><CatchIcon /></MenuButton>
            <Spacer />
            <MenuGroup>
              <MenuButton $w={28} aria-label="Pointer tool"><PointerIcon /><DimChevron><Chevron /></DimChevron></MenuButton>
              <MenuButton $w={28} aria-label="Marquee tool"><MarqueeIcon /><DimChevron><Chevron /></DimChevron></MenuButton>
            </MenuGroup>
            <Gap $w={110} />
            <Field>
              Snap:
              <SelectBox $w={108}><Select defaultValue="Smart"><option>Smart</option></Select><SteppersIcon /></SelectBox>
            </Field>
            <Gap $w={7} />
            <Field>
              Drag:
              <SelectBox $w={69}><Select defaultValue="No Overlap"><option>No Overlap</option></Select><SteppersIcon /></SelectBox>
            </Field>
            <Gap $w={6} />
            <MenuButton $w={21} $solid aria-label="Waveform zoom"><WaveIcon /></MenuButton>
            <Gap $w={6} />
            <MenuGroup>
              <MenuButton $w={20} aria-label="Fit vertically"><FitVIcon /></MenuButton>
              <MenuButton aria-label="Fit horizontally"><FitHIcon /></MenuButton>
            </MenuGroup>
            <Gap $w={6} />
            <ZoomBox><ArrowVIcon /><ZoomSlider type="range" min={0} max={20} defaultValue={8} aria-label="Vertical zoom" /></ZoomBox>
            <Gap $w={4} />
            <ZoomBox><ArrowHIcon /><ZoomSlider type="range" min={0} max={20} defaultValue={1} aria-label="Horizontal zoom" /></ZoomBox>
          </MenuBar>

          <HeadRow>
            <HeadTools>
              <MenuButton $solid aria-label="Add track"><PlusIcon /></MenuButton>
              <Gap $w={6} />
              <MenuButton $solid aria-label="Duplicate track"><DuplicateIcon /></MenuButton>
              <Gap $w={7} />
              <MenuButton $solid><MenuText>S</MenuText></MenuButton>
              <Spacer />
              <MenuButton $solid aria-label="Global tracks"><TrackBoxIcon /></MenuButton>
            </HeadTools>
            <Ruler>
              <RulerCells>
                {Array.from({ length: 13 }, (_, i) => (
                  <RulerCell key={i}>
                    <RulerLabel>{41 + i * 2}</RulerLabel>
                    <Ticks>
                      {Array.from({ length: 8 }, (_, k) => <Tick key={k} $bar={k % 4 === 0} />)}
                    </Ticks>
                  </RulerCell>
                ))}
              </RulerCells>
            </Ruler>
          </HeadRow>

          <Board>
            <HeadersColumn>
              <TrackList>
                {tracks.map((t) => <TrackHeader key={t.n} t={t} />)}
              </TrackList>
            </HeadersColumn>
            <LanesColumn>
              <Lanes>
                <BarLines>
                  {Array.from({ length: 26 }, (_, i) => <BarLine key={i} />)}
                </BarLines>
                {tracks.map((t) => (
                  <Lane key={t.n} $sel={t.sel}>
                    {t.regions?.map((r) => <Region key={r.x} r={r} />)}
                  </Lane>
                ))}
              </Lanes>
            </LanesColumn>
            <Playhead>
              <svg width="13" height="13" viewBox="0 0 13 13" aria-hidden="true">
                <path d="M3 .5h7q2 0 2 2.500v2q0 1.500-1 2.500L6.500 13 2 7.500Q1 6.500 1 5V3Q1 .5 3 .5z" fill="#dc3a45" />
              </svg>
              <PlayLine />
            </Playhead>
          </Board>
        </Workspace>
      </Main>
    </Shell>
  );
}
